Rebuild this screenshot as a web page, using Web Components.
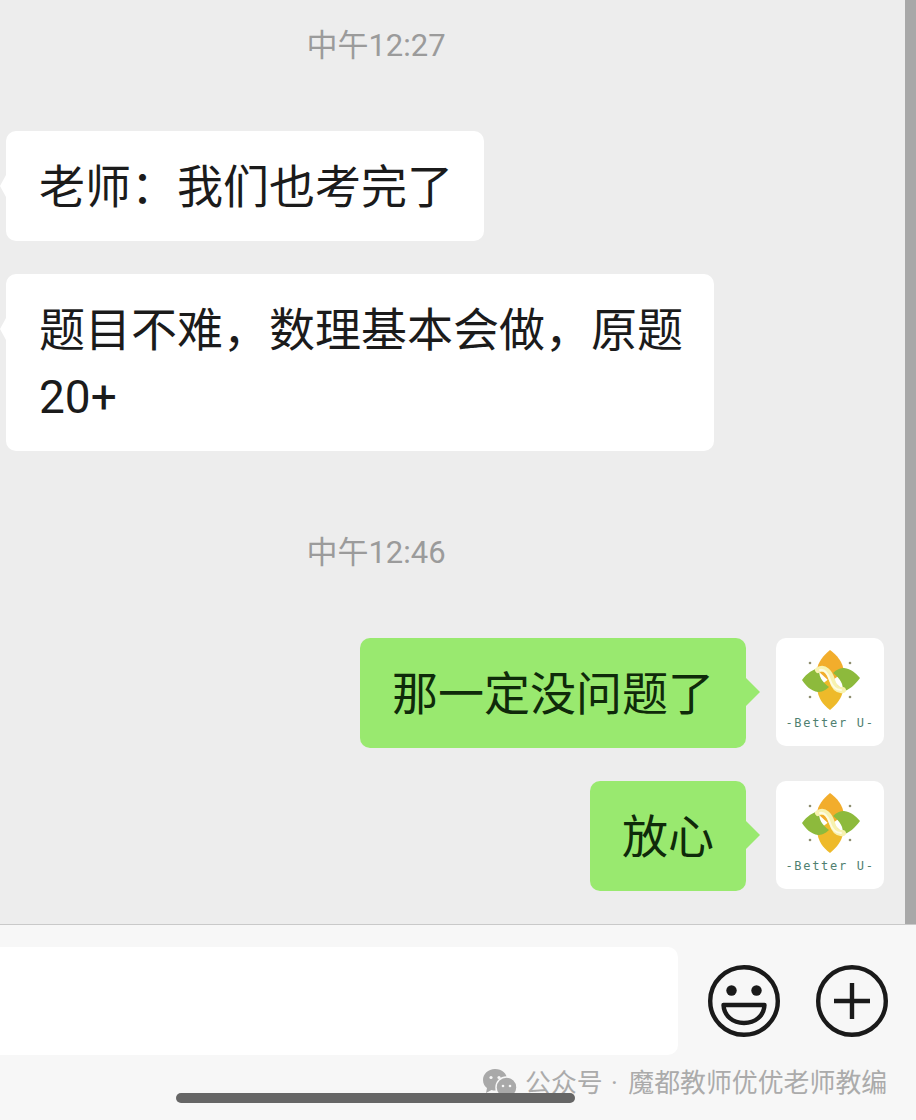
<!DOCTYPE html>
<html><head><meta charset="utf-8"><style>
html,body{margin:0;padding:0}
body{width:916px;height:1120px;overflow:hidden;font-family:Roboto,"Noto Sans CJK SC",sans-serif;background:#ededed}
</style></head><body>
<chat-screen>
<time-stamp style="--mt:28px">中午12:27</time-stamp>
<chat-bubble side="left" style="--mt:67px">老师：我们也考完了</chat-bubble>
<chat-bubble side="left" style="--mt:33px;--w:708px">题目不难，数理基本会做，原题<br>20+</chat-bubble>
<time-stamp style="--mt:84px">中午12:46</time-stamp>
<chat-bubble side="right" style="--mt:67px">那一定没问题了</chat-bubble>
<chat-bubble side="right" style="--mt:33px">放心</chat-bubble>
</chat-screen>
<script>
const FONT='Roboto,"Noto Sans CJK SC",sans-serif';
class TimeStamp extends HTMLElement{constructor(){super();this.attachShadow({mode:'open'}).innerHTML=`<style>
:host{display:block;margin-top:var(--mt,0);width:752px;text-align:center;font:31px/36px ${FONT};color:#9b9b9b}
</style><slot></slot>`}}
customElements.define('time-stamp',TimeStamp);

class BrandAvatar extends HTMLElement{constructor(){super();this.attachShadow({mode:'open'}).innerHTML=`<style>
:host{display:flex;flex-direction:column;align-items:center;width:108px;height:108px;background:#fff;border-radius:10px;flex:none;box-sizing:border-box;padding-top:11px}
svg{display:block;filter:blur(.6px)}
span{font:12px/12px "DejaVu Sans Mono","Liberation Mono",monospace;color:#4f7f70;letter-spacing:1.700px;margin-top:6px;white-space:nowrap}
</style>
<svg width="62" height="62" viewBox="0 0 62 62">
<path d="M31 1C24 7 19 13 18 21L31 33L45 23C44 13 38 6 31 1Z" fill="#f2ad2c"/>
<path d="M31 61C38 55 43 49 44 41L31 29L18 39C19 49 24 56 31 61Z" fill="#eeba2a"/>
<path d="M3 31C8 24 14 20 21 19C18 26 24 34 30 38C26 42 22 43 19 43C12 42 7 37 3 31Z" fill="#8dba3c"/>
<path d="M61 29C56 36 50 41 43 43C46 36 40 28 34 24C38 20 42 19 45 19C52 20 57 24 61 29Z" fill="#8dba3c"/>
<path d="M19 21C26 17 31 24 33 31C35 38 38 42 44 41" fill="none" stroke="#f7f2b0" stroke-width="6" stroke-linecap="round"/>
<path d="M21 21C26 20 29 25 31 31C33 37 36 41 42 41" fill="none" stroke="#fdfbe2" stroke-width="2" stroke-linecap="round"/>
<circle cx="11" cy="14" r="1.300" fill="#8f8f70"/><circle cx="51" cy="14" r="1.300" fill="#8f8f70"/><circle cx="11" cy="48" r="1.300" fill="#8f8f70"/><circle cx="51" cy="48" r="1.300" fill="#8f8f70"/>
</svg><span>-Better U-</span>`}}
customElements.define('brand-avatar',BrandAvatar);

class ChatBubble extends HTMLElement{constructor(){super();const right=this.getAttribute('side')==='right';
this.attachShadow({mode:'open'}).innerHTML=`<style>
:host{display:flex;align-items:flex-start;margin-top:var(--mt,0);justify-content:${right?'flex-end':'flex-start'};
 ${right?'padding-right:21px;gap:30px':'padding-left:6px'}}
.b{position:relative;box-sizing:border-box;border-radius:10px;padding:${right?'23px 32px 20px':'23px 31px 20px 33px'};width:var(--w,auto);
 background:${right?'#99e96f':'#fff'};color:${right?'#0f2a0a':'#1b1b1b'};font:46px/67px ${FONT};white-space:nowrap}
.b::after{content:"";position:absolute;${right
 ?'top:40px;right:-14px;border-top:14px solid transparent;border-bottom:14px solid transparent;border-left:14px solid #99e96f'
 :'top:44px;left:-6px;border-top:11px solid transparent;border-bottom:11px solid transparent;border-right:6px solid #fff'}}
</style><div class="b"><slot></slot></div>${right?'<brand-avatar></brand-avatar>':''}`}}
customElements.define('chat-bubble',ChatBubble);

class InputBar extends HTMLElement{constructor(){super();this.attachShadow({mode:'open'}).innerHTML=`<style>
:host{display:flex;align-items:flex-start;position:relative;box-sizing:border-box;height:196px;background:#f7f7f7;border-top:1px solid #c9c9c9;padding-top:22px;padding-right:28px;gap:30px}
.field{flex:1;height:108px;background:#fff;border-radius:0 10px 10px 0}
.icons{display:flex;gap:36px;padding-top:18px}
svg{display:block}
.home{position:absolute;left:176px;top:168px;width:399px;height:10px;border-radius:5px;background:#666}
.mark{position:absolute;left:482px;top:142px;display:flex;align-items:center;font:25.900px/32px ${FONT};color:#ababab;white-space:nowrap;gap:7px}
.dot{margin:0 4px 0 2px}
</style>
<div class="field"></div>
<div class="icons">
<svg width="72" height="72" viewBox="0 0 72 72" fill="none" stroke="#1a1a1a" stroke-width="4.400"><circle cx="36" cy="36" r="33.800"/><circle cx="23.500" cy="25.500" r="5.200" fill="#1a1a1a" stroke="none"/><circle cx="48.500" cy="25.500" r="5.200" fill="#1a1a1a" stroke="none"/><path d="M15.500 40H56.500C56 51 47 58 36 58C25 58 16 51 15.500 40Z" stroke-linejoin="round"/></svg>
<svg width="72" height="72" viewBox="0 0 72 72" fill="none" stroke="#1a1a1a" stroke-width="4.400"><circle cx="36" cy="36" r="33.800"/><path d="M18 36H54M36 18V54"/></svg>
</div>
<div class="mark"><svg width="36" height="30" viewBox="0 0 36 30"><path d="M13 1C6 1 1 6 1 12C1 16 3 18.500 5 20L4 25L9.500 22C11 22.500 12 22.500 13 22.500C20 22.500 25 17 25 11.500C25 5.500 20 1 13 1Z" fill="#a9a9a9"/><circle cx="9" cy="9.500" r="1.600" fill="#f7f7f7"/><circle cx="17" cy="9.500" r="1.600" fill="#f7f7f7"/><circle cx="24.500" cy="19.500" r="10.500" fill="#a9a9a9" stroke="#f7f7f7" stroke-width="1.500"/><circle cx="21" cy="18" r="1.300" fill="#f7f7f7"/><circle cx="28" cy="18" r="1.300" fill="#f7f7f7"/></svg><span>公众号<span class="dot"> · </span>魔都教师优优老师教编</span></div>
<div class="home"></div>`}}
customElements.define('input-bar',InputBar);

class ChatScreen extends HTMLElement{constructor(){super();this.attachShadow({mode:'open'}).innerHTML=`<style>
:host{display:flex;flex-direction:column;width:916px;height:1120px;background:#ededed}
.top{display:flex;height:924px;flex:none}
.msgs{flex:1;display:flex;flex-direction:column;min-width:0}
.bar{width:11px;background:#a8a8a8;flex:none}
</style><div class="top"><div class="msgs"><slot></slot></div><div class="bar"></div></div><input-bar></input-bar>`}}
customElements.define('chat-screen',ChatScreen);
</script>
</body></html>
